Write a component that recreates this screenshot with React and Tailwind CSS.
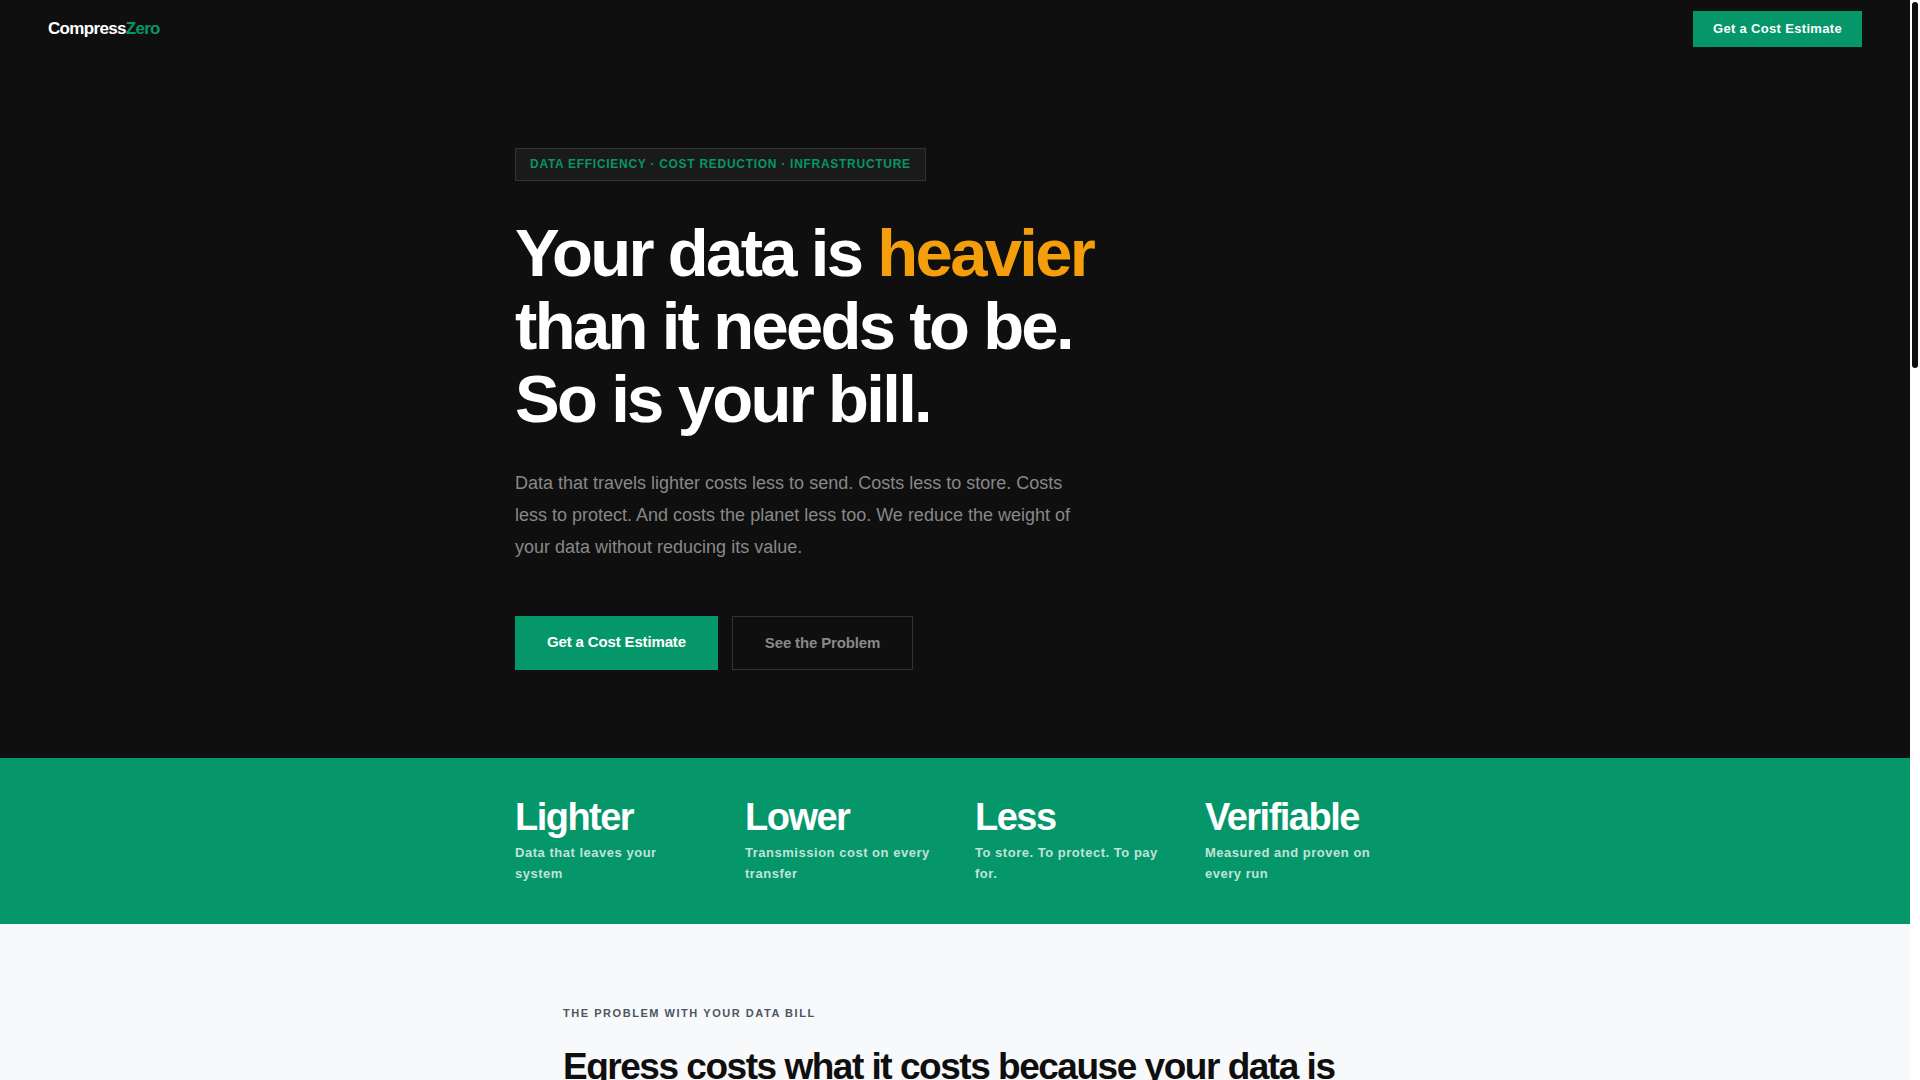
import React from "react";

const stats = [
  { value: "Lighter", label: "Data that leaves your system" },
  { value: "Lower", label: "Transmission cost on every transfer" },
  { value: "Less", label: "To store. To protect. To pay for." },
  { value: "Verifiable", label: "Measured and proven on every run" },
];

const Nav = () => (
  <nav className="flex items-center justify-between px-12 py-[11px]">
    <a href="#top" className="text-[17px] leading-6 font-bold tracking-[-0.04em] text-white">
      Compress<span className="text-[#059669]">Zero</span>
    </a>
    <a
      href="#estimate"
      className="bg-[#059669] px-5 py-2 text-[13px] leading-5 font-bold tracking-wide text-white"
    >
      Get a Cost Estimate
    </a>
  </nav>
);

const Hero = () => (
  <div className="mx-auto max-w-[880px] pt-[90px] pb-[88px]">
    <p className="inline-block border border-[#333] bg-[#1a1a1a] px-[14px] py-[6px] text-xs leading-[19px] font-bold tracking-[0.06em] text-[#059669] uppercase">
      Data Efficiency · Cost Reduction · Infrastructure
    </p>
    <h1 className="mt-[35px] text-[67px] leading-[73px] font-bold tracking-[-0.04em] text-white">
      Your data is <span className="text-[#f59e0b]">heavier</span>
      <br />
      than it needs to be.
      <br />
      So is your bill.
    </h1>
    <p className="mt-8 max-w-[560px] text-lg leading-8 text-[#888]">
      Data that travels lighter costs less to send. Costs less to store. Costs
      less to protect. And costs the planet less too. We reduce the weight of
      your data without reducing its value.
    </p>
    <div className="mt-[53px] flex flex-wrap gap-[14px] text-[15px] leading-6 font-bold tracking-[-0.01em]">
      <a href="#estimate" className="bg-[#059669] px-8 py-[14px] text-white">
        Get a Cost Estimate
      </a>
      <a
        href="#problem"
        className="border border-[#333] px-8 py-[14px] text-[#888]"
      >
        See the Problem
      </a>
    </div>
  </div>
);

const Stats = () => (
  <section className="bg-[#059669] py-10">
    <div className="mx-auto grid max-w-[880px] grid-cols-4 gap-10">
      {stats.map((stat) => (
        <div key={stat.value}>
          <h3 className="text-[38px] leading-[38px] font-bold tracking-[-0.04em] text-white">
            {stat.value}
          </h3>
          <p className="mt-[6px] text-[13px] leading-[21px] font-bold tracking-[0.04em] text-white/75">
            {stat.label}
          </p>
        </div>
      ))}
    </div>
  </section>
);

const Problem = () => (
  <section id="problem" className="bg-[#f8f9fb] py-20">
    <div className="mx-auto max-w-[880px] px-12">
      <p className="text-[11px] leading-[18px] font-bold tracking-[0.14em] text-[#4b5563] uppercase">
        The problem with your data bill
      </p>
      <h2 className="mt-[23px] text-[37px] leading-[44px] font-bold tracking-[-0.04em] text-[#0f0f0f]">
        Egress costs what it costs because your data is
      </h2>
    </div>
  </section>
);

const App = () => {
  return (
    <div className="flex h-screen bg-white font-['Liberation_Sans',Arial,sans-serif]">
      <main
        id="top"
        className="min-w-0 flex-1 overflow-y-auto bg-[#f8f9fb] [scrollbar-width:none]"
      >
        <header className="bg-[#0f0f0f]">
          <Nav />
          <Hero />
        </header>
        <Stats />
        <Problem />
      </main>
      {/* scroll track */}
      <div className="w-[10px] shrink-0 p-[2px]" aria-hidden="true">
        <div className="h-[34%] rounded-full bg-[#0f0f0f]" />
      </div>
    </div>
  );
};

export default App;
